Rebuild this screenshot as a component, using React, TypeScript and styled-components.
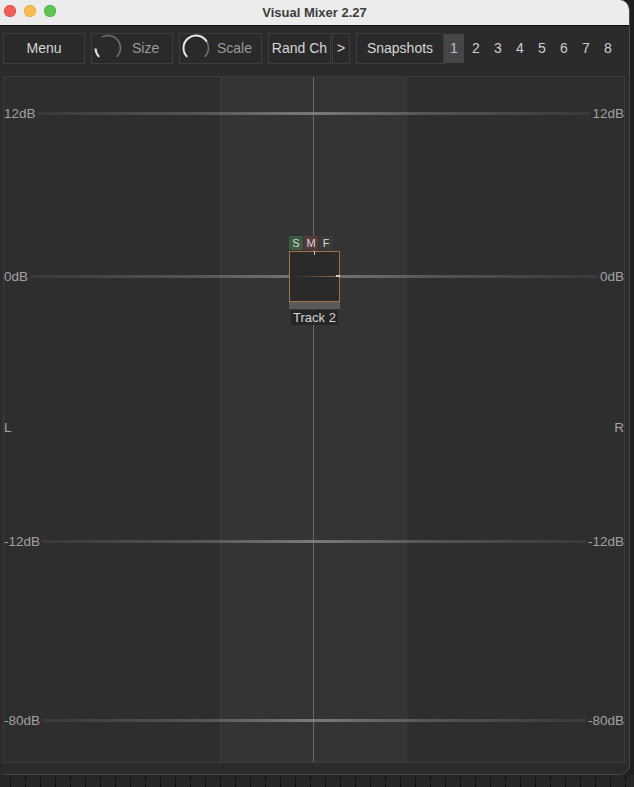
import * as React from "react";
import styled, { createGlobalStyle } from "styled-components";

const GlobalStyle = createGlobalStyle`
  html, body {
    margin: 0;
    padding: 0;
    background: #1f1f1f;
  }
  body {
    font-family: "Liberation Sans", Arial, sans-serif;
  }
`;

const Desktop = styled.div`
  width: 634px;
  height: 787px;
  display: flex;
  flex-direction: column;
  background: #1f1f1f;
  overflow: hidden;
`;

const Window = styled.div`
  width: 630px;
  height: 775px;
  flex: none;
  display: flex;
  flex-direction: column;
  background: #2b2b2b;
  border-right: 1px solid #4a4a4a;
  border-bottom: 1px solid #444;
  border-radius: 0 10px 10px 4px;
  overflow: hidden;
  box-sizing: border-box;
`;

const DotStrip = styled.div`
  flex: 1;
  background-color: #262626;
  background-image: repeating-linear-gradient(
      to bottom,
      #262626 0 1px,
      transparent 1px 2px
    ),
    repeating-linear-gradient(
      to right,
      transparent 0 10px,
      #050505 10px 11px,
      transparent 11px 15px
    );
`;

const TitleBar = styled.div`
  position: relative;
  height: 25px;
  flex: none;
  display: flex;
  align-items: center;
  justify-content: center;
  background: #ececec;
  border-bottom: 1px solid #0c0c0c;
  font-family: "Liberation Sans", Arial, sans-serif;
  font-weight: bold;
  font-size: 13px;
  color: #3d3d3d;
`;

const Lights = styled.div`
  position: absolute;
  left: 4px;
  top: 5px;
  display: flex;
  gap: 8px;
`;

const Light = styled.span<{ $c: string; $b: string }>`
  width: 12px;
  height: 12px;
  border-radius: 50%;
  background: ${(p) => p.$c};
  box-shadow: inset 0 0 0 0.5px ${(p) => p.$b};
`;

const Toolbar = styled.div`
  height: 44px;
  flex: none;
  display: flex;
  align-items: center;
  padding: 0 3px;
  gap: 6px;
`;

const Btn = styled.div<{ $w: number }>`
  width: ${(p) => p.$w}px;
  height: 31px;
  box-sizing: border-box;
  border: 1px solid #3d3d3d;
  background: #2a2a2a;
  display: flex;
  align-items: center;
  justify-content: center;
  color: #d6d6d6;
  font-size: 14px;
`;

const KnobBtn = styled(Btn)<{ $gap: number }>`
  justify-content: flex-start;
  padding-left: 1px;
  color: #9a9a9a;
  gap: ${(p) => p.$gap}px;
`;

const Pair = styled.div`
  display: flex;
  gap: 1px;
`;

const Numbers = styled.div`
  display: flex;
  align-items: center;
  margin-left: -6px;
`;

const Num = styled.div<{ $on?: boolean }>`
  width: 22px;
  height: 29px;
  display: flex;
  align-items: center;
  justify-content: center;
  font-size: 14px;
  color: ${(p) => (p.$on ? "#c0c0c0" : "#cfcfcf")};
  background: ${(p) => (p.$on ? "#464646" : "transparent")};
  &:first-child {
    width: 20px;
    margin-right: 1px;
  }
`;

const Panel = styled.div`
  position: relative;
  margin: 6px 4px 0 3px;
  height: 687px;
  box-sizing: border-box;
  border: 1px solid #3b3b3b;
  background: #2e2e2e;
  display: grid;
  grid-template-columns: 216px 187px 1fr;
`;

const Side = styled.div``;

const Center = styled.div`
  position: relative;
  background: #343434;
  border-left: 1px solid #3c3c3c;
  border-right: 1px solid #3c3c3c;
  display: flex;
  justify-content: center;
`;

const CenterLine = styled.div`
  width: 1px;
  height: 100%;
  background: #6a6a6a;
`;

const DbRow = styled.div<{ $top: number }>`
  position: absolute;
  left: 0;
  right: 0;
  top: ${(p) => p.$top - 8}px;
  height: 16px;
  display: flex;
  align-items: center;
  gap: 2px;
  color: #a2a2a2;
  font-size: 13.5px;
  pointer-events: none;
`;

const DbLine = styled.div`
  flex: 1;
  height: 3px;
  background: linear-gradient(
    to right,
    rgba(120, 120, 120, 0.15),
    rgba(120, 120, 120, 0.55) 30%,
    rgba(128, 128, 128, 0.9) 50%,
    rgba(120, 120, 120, 0.55) 70%,
    rgba(120, 120, 120, 0.15)
  );
`;

const DbLabel = styled.span``;

const SideLabel = styled.div<{ $right?: boolean }>`
  position: absolute;
  top: 343px;
  ${(p) => (p.$right ? "right: 0;" : "left: 0;")}
  color: #a2a2a2;
  font-size: 13.5px;
`;

const Track = styled.div`
  position: absolute;
  left: 285px;
  top: 159px;
  width: 51px;
  display: flex;
  flex-direction: column;
  align-items: center;
`;

const Flags = styled.div`
  align-self: flex-start;
  display: flex;
  gap: 1px;
  margin-bottom: 1px;
`;

const Flag = styled.div<{ $bg: string }>`
  width: 14px;
  height: 14px;
  background: ${(p) => p.$bg};
  color: #d6d6d6;
  font-size: 11px;
  display: flex;
  align-items: center;
  justify-content: center;
`;

const Box = styled.div`
  position: relative;
  width: 51px;
  height: 51px;
  box-sizing: border-box;
  border: 1px solid #a47248;
  background: #2a2a2a;
`;

const BoxLevel = styled.div`
  position: absolute;
  left: 2px;
  right: 0;
  top: 24px;
  height: 1px;
  background: linear-gradient(to right, #2a2a2a, #6a5444 60%, #8a6a50);
`;

const BoxTick = styled.div`
  position: absolute;
  right: -1px;
  top: 23px;
  width: 4px;
  height: 2px;
  background: #cfcfcf;
`;

const BoxTopTick = styled.div`
  position: absolute;
  left: 24px;
  top: -1px;
  width: 1px;
  height: 4px;
  background: #cfcfcf;
`;

const Bar = styled.div`
  width: 51px;
  height: 7px;
  background: #5a5a5a;
`;

const TrackName = styled.div`
  margin-top: 1px;
  padding: 0 2px;
  background: #262626;
  color: #d6d6d6;
  font-size: 13px;
  line-height: 15px;
  white-space: nowrap;
`;

function pt(a: number, r: number) {
  const rad = (a * Math.PI) / 180;
  return [15 + r * Math.sin(rad), 15 - r * Math.cos(rad)];
}

function arc(a0: number, a1: number, r: number) {
  const [x0, y0] = pt(a0, r);
  const [x1, y1] = pt(a1, r);
  const large = a1 - a0 > 180 ? 1 : 0;
  return `M${x0.toFixed(2)} ${y0.toFixed(2)} A${r} ${r} 0 ${large} 1 ${x1.toFixed(2)} ${y1.toFixed(2)}`;
}

const Knob: React.FC<{ white: [number, number]; gray: [number, number] }> = ({
  white,
  gray,
}) => (
  <svg width="30" height="30" viewBox="0 0 30 30">
    <path d={arc(gray[0], gray[1], 12.5)} stroke="#6c6c6c" strokeWidth="1.6" fill="none" />
    <path d={arc(white[0], white[1], 12.5)} stroke="#e8e8e8" strokeWidth="2" fill="none" />
  </svg>
);

const dbMarks = [
  { label: "12dB", top: 36 },
  { label: "0dB", top: 199 },
  { label: "-12dB", top: 464 },
  { label: "-80dB", top: 643 },
];

export default function App() {
  return (
    <>
      <GlobalStyle />
      <Desktop>
        <Window>
          <TitleBar>
            <Lights>
              <Light $c="#ed5f57" $b="#d04c44" />
              <Light $c="#f5bd4f" $b="#d9a13a" />
              <Light $c="#5fc454" $b="#4aa840" />
            </Lights>
            Visual Mixer 2.27
          </TitleBar>
          <Toolbar>
            <Btn $w={82}>Menu</Btn>
            <KnobBtn $w={82} $gap={9}>
              <Knob white={[225, 268]} gray={[330, 495]} />
              Size
            </KnobBtn>
            <KnobBtn $w={83} $gap={6}>
              <Knob white={[225, 420]} gray={[420, 495]} />
              Scale
            </KnobBtn>
            <Pair>
              <Btn $w={63}>Rand Ch</Btn>
              <Btn $w={18}>&gt;</Btn>
            </Pair>
            <Btn $w={88}>Snapshots</Btn>
            <Numbers>
              {[1, 2, 3, 4, 5, 6, 7, 8].map((n) => (
                <Num key={n} $on={n === 1}>
                  {n}
                </Num>
              ))}
            </Numbers>
          </Toolbar>
          <Panel>
            <Side />
            <Center>
              <CenterLine />
            </Center>
            <Side />
            {dbMarks.map((m) => (
              <DbRow key={m.label} $top={m.top}>
                <DbLabel>{m.label}</DbLabel>
                <DbLine />
                <DbLabel>{m.label}</DbLabel>
              </DbRow>
            ))}
            <SideLabel>L</SideLabel>
            <SideLabel $right>R</SideLabel>
            <Track>
              <Flags>
                <Flag $bg="#3b5a3e">S</Flag>
                <Flag $bg="#553a3a">M</Flag>
                <Flag $bg="#3a3a3a">F</Flag>
              </Flags>
              <Box>
                <BoxTopTick />
                <BoxLevel />
                <BoxTick />
              </Box>
              <Bar />
              <TrackName>Track 2</TrackName>
            </Track>
          </Panel>
        </Window>
        <DotStrip />
      </Desktop>
    </>
  );
}
